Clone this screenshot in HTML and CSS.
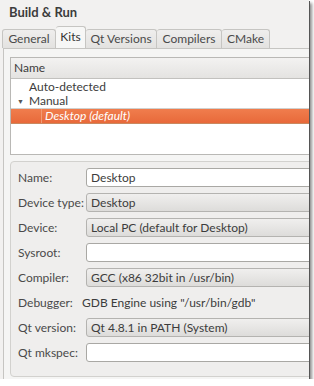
FILE: index.html
```html
<!DOCTYPE html>
<html lang="en">
<head>
    <meta charset="UTF-8">
    <title>Build &amp; Run</title>
    <link rel="stylesheet" href="styles.css">
</head>
<body>
    <div class="window">
        <!-- Page title -->
        <h1 class="title">Build &amp; Run</h1>

        <!-- Tab bar -->
        <div class="tabs">
            <div class="tab tab-general">General</div>
            <div class="tab tab-kits active">Kits</div>
            <div class="tab tab-qt">Qt Versions</div>
            <div class="tab tab-compilers">Compilers</div>
            <div class="tab tab-cmake">CMake</div>
        </div>

        <div class="pane">
            <!-- Kit tree -->
            <div class="tree">
                <div class="tree-header">Name</div>
                <div class="tree-row">Auto-detected</div>
                <div class="tree-row"><span class="arrow">&#9660;</span>Manual</div>
                <div class="tree-row selected"><span class="gutter"></span>Desktop (default)</div>
            </div>

            <!-- Kit details -->
            <div class="group">
                <div class="form">
                    <label>Name:</label>
                    <div class="edit">Desktop</div>

                    <label>Device type:</label>
                    <div class="combo">Desktop</div>

                    <label>Device:</label>
                    <div class="combo">Local PC (default for Desktop)</div>

                    <label>Sysroot:</label>
                    <div class="edit"></div>

                    <label>Compiler:</label>
                    <div class="combo">GCC (x86 32bit in /usr/bin)</div>

                    <label>Debugger:</label>
                    <div class="plain">GDB Engine using "/usr/bin/gdb"</div>

                    <label>Qt version:</label>
                    <div class="combo">Qt 4.8.1 in PATH (System)</div>

                    <label>Qt mkspec:</label>
                    <div class="edit"></div>
                </div>
            </div>
        </div>
    </div>
</body>
</html>
```

FILE: styles.css
```css
/* General page settings */
body {
    margin: 0;
    padding: 0;
    background: #fff;
    font-family: 'Lato', 'Open Sans', sans-serif;
    font-size: 12px;
    color: #3c3c3c;
}

/* Window frame with its drop shadow */
.window {
    width: 309px;
    height: 379px;
    background: #f2f1f0;
    overflow: hidden;
    box-shadow: 1px 1px 0 #555, 3px 3px 3px rgba(0, 0, 0, 0.45);
}

.title {
    margin: 0;
    padding: 4px 0 0 9px;
    height: 18px;
    font-size: 13px;
    font-weight: bold;
    color: #3c3c3c;
}

/* Tab bar */
.tabs {
    display: flex;
    align-items: flex-end;
    margin-top: 4px;
    padding-left: 2px;
    height: 22px;
}

.tab {
    height: 18px;
    line-height: 18px;
    text-align: center;
    border: 1px solid #c6c5c2;
    border-bottom: none;
    border-left: none;
    border-radius: 3px 3px 0 0;
    background: linear-gradient(to bottom, #efeeed, #e3e2e0);
    color: #4a4a4a;
}

.tab:first-child {
    border-left: 1px solid #c6c5c2;
}

.tab-general { width: 52px; }
.tab-kits { width: 29px; }
.tab-qt { width: 70px; }
.tab-compilers { width: 64px; }
.tab-cmake { width: 47px; }

.tab.active {
    height: 21px;
    line-height: 20px;
    background: #f7f7f6;
    color: #333;
}

/* Tab pane */
.pane {
    margin-left: 3px;
    width: 340px;
    height: 340px;
    padding: 8px 0 0 6px;
    border-top: 1px solid #c6c5c2;
    border-left: 1px solid #c6c5c2;
    background: #f5f5f4;
}

/* Kit tree */
.tree {
    height: 96px;
    border: 1px solid #b9b8b5;
    background: #fff;
}

.tree-header {
    height: 20px;
    line-height: 20px;
    padding-left: 3px;
    background: linear-gradient(to bottom, #f3f2f1, #e4e3e1);
    border-bottom: 1px solid #c2c1be;
    color: #3c3c3c;
}

.tree-row {
    height: 14px;
    line-height: 14px;
    padding-left: 18px;
    display: flex;
    align-items: center;
}

.tree-header + .tree-row {
    margin-top: 1px;
}

.arrow {
    font-size: 7px;
    width: 12px;
    margin-left: -12px;
    color: #555;
}

.tree-row.selected {
    height: 14px;
    padding-left: 0;
    background: linear-gradient(to bottom, #f07d4d, #e8693a);
    border-top: 1px solid #d0d0ce;
    border-bottom: 1px solid #c9885f;
    color: #fff;
    font-style: italic;
}

.gutter {
    width: 30px;
    height: 100%;
    margin-right: 3px;
    border-right: 1px solid #f29a74;
}

/* Details group box */
.group {
    margin-top: 6px;
    height: 208px;
    padding: 6px 0 0 7px;
    border: 1px solid #d2d1ce;
    border-radius: 4px;
    background: #efeeed;
}

.form {
    display: grid;
    grid-template-columns: 68px 1fr;
    grid-auto-rows: 19px;
    row-gap: 6px;
    align-items: center;
}

.form label {
    color: #4a4a4a;
}

.edit,
.combo {
    box-sizing: border-box;
    height: 19px;
    line-height: 17px;
    padding-left: 4px;
    border-radius: 3px;
}

.edit {
    background: #fff;
    border: 1px solid #a9a8a4;
}

.combo {
    background: linear-gradient(to bottom, #f0efee, #dddcda);
    border: 1px solid #b4b3b0;
}

.plain {
    padding-left: 0;
    margin-left: -4px;
}
```
